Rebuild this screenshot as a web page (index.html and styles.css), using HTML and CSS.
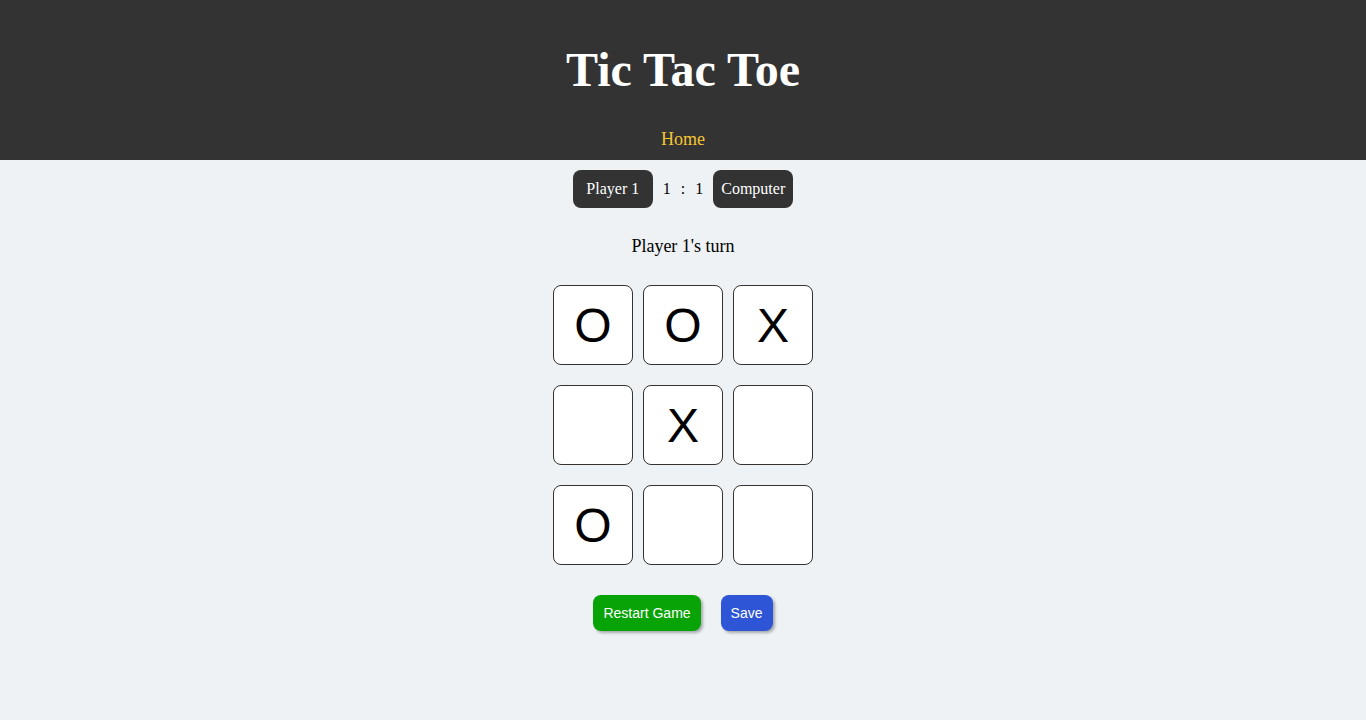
FILE: index.html
```html
<!DOCTYPE html>
<html>
<head>
<meta charset="utf-8">
<title>Tic Tac Toe</title>
<link rel="stylesheet" href="styles.css">
</head>
<body>
<header class="site-header">
  <h1 class="title">Tic Tac Toe</h1>
  <nav class="nav"><a class="nav-link" href="#">Home</a></nav>
</header>
<main class="game">
  <div class="scoreboard">
    <div class="player">Player 1</div>
    <span class="score">1</span>
    <span class="score">:</span>
    <span class="score">1</span>
    <div class="player">Computer</div>
  </div>
  <p class="status">Player 1's turn</p>
  <div class="board">
    <div class="cell">O</div>
    <div class="cell">O</div>
    <div class="cell">X</div>
    <div class="cell"></div>
    <div class="cell">X</div>
    <div class="cell"></div>
    <div class="cell">O</div>
    <div class="cell"></div>
    <div class="cell"></div>
  </div>
  <div class="actions">
    <button class="btn btn-restart">Restart Game</button>
    <button class="btn btn-save">Save</button>
  </div>
</main>
</body>
</html>
```
FILE: styles.css
```css
html, body {
  margin: 0;
  padding: 0;
}
body {
  background: #eef2f5;
  font-family: "Liberation Serif", "Times New Roman", serif;
  color: #000;
  min-height: 720px;
}
.site-header {
  background: #333333;
  height: 160px;
  box-sizing: border-box;
  padding: 10px 0;
  display: flex;
  flex-direction: column;
  align-items: center;
}
.title {
  margin: 32px 0;
  font-size: 48px;
  line-height: 55px;
  font-weight: bold;
  color: #ffffff;
}
.nav {
  font-size: 18px;
  line-height: 21px;
}
.nav-link {
  color: #f7c531;
  text-decoration: none;
}
.game {
  display: flex;
  flex-direction: column;
  align-items: center;
}
.scoreboard {
  margin-top: 10px;
  display: flex;
  align-items: center;
  gap: 10px;
  font-size: 16px;
}
.player {
  width: 80px;
  height: 38px;
  background: #333333;
  color: #ffffff;
  border-radius: 8px;
  display: flex;
  align-items: center;
  justify-content: center;
  font-size: 16px;
  white-space: nowrap;
}
.score {
  font-size: 16px;
}
.status {
  margin: 28px 0 0;
  font-size: 18px;
  line-height: 21px;
}
.board {
  margin-top: 28px;
  display: grid;
  grid-template-columns: repeat(3, 80px);
  grid-auto-rows: 80px;
  column-gap: 10px;
  row-gap: 20px;
}
.cell {
  box-sizing: border-box;
  background: #ffffff;
  border: 1px solid #333333;
  border-radius: 8px;
  display: flex;
  align-items: center;
  justify-content: center;
  font-family: "Liberation Sans", Arial, sans-serif;
  font-size: 48px;
  color: #000;
}
.actions {
  margin-top: 30px;
  display: flex;
  gap: 20px;
}
.btn {
  height: 36px;
  border: none;
  border-radius: 8px;
  padding: 0 10px;
  color: #ffffff;
  font-family: "Liberation Sans", Arial, sans-serif;
  font-size: 14px;
  box-shadow: 2px 2px 3px rgba(0, 0, 0, 0.3);
  cursor: pointer;
}
.btn-restart {
  background: #07a307;
}
.btn-save {
  background: #2d55d6;
}
```
